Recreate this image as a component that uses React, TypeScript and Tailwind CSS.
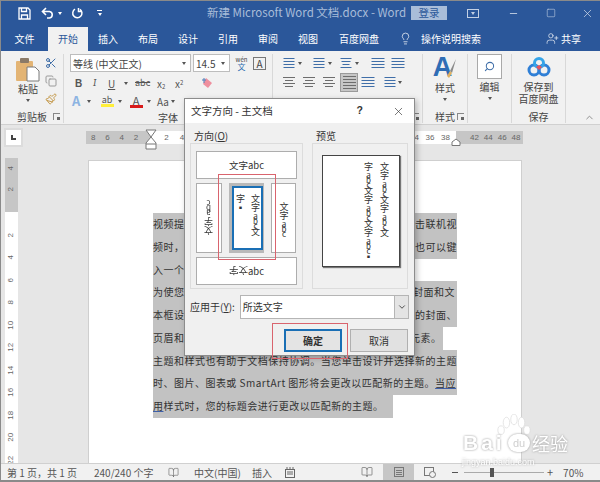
import { BookOpen, ChevronDown, ChevronUp, Copy, Lightbulb, Minus, Paintbrush, Scissors, Search, Square, UserPlus, X } from "lucide-react"

const cjk = { fontFamily: '"Noto Sans CJK SC", "Liberation Sans", sans-serif' }

const hNums = {
  left: ["8", "6", "4", "2"],
  mid: ["2", "4", "6", "8", "10", "12", "14", "16", "18", "20", "22", "24", "26", "28", "30", "32", "34", "36", "38"],
  right: ["42", "44", "46", "48"],
}

const docLines = [
  { text: "视频提供了功能强大的方法帮助您证明您的观点。当您单击联机视", w: "w-[304px]" },
  { text: "频时，可以在想要添加的视频的嵌入代码中进行粘贴。您也可以键", w: "w-[304px]" },
  { text: "入一个关键字以联机搜索最适合您的文档的视频。", w: "w-[240px]" },
  { text: "为使您的文档具有专业外观，Word 提供了页眉、页脚、封面和文", w: "w-[304px]" },
  { text: "本框设计，这些设计可互为补充。例如，您可以添加匹配的封面、", w: "w-[304px]" },
  { text: "页眉和提要栏。单击“插入”，然后从不同库中选择所需元素。", w: "w-[290px]" },
  { text: "主题和样式也有助于文档保持协调。当您单击设计并选择新的主题", w: "w-[304px]" },
]

function Caret({ className = "" }: { className?: string }) {
  return <span className={`inline-block w-0 h-0 border-x-[2px] border-x-transparent border-t-[3px] border-t-[#555] ${className}`} />
}

function Lines({ rows, color = "#6d6d6d", wide = 12 }: { rows: number[]; color?: string; wide?: number }) {
  return (
    <svg width={wide} height={rows.length * 3 + 1} className="shrink-0">
      {rows.map((r, i) => (
        <rect key={i} x={(wide - r) / 2} y={i * 3 + 1} width={r} height="1" fill={color} />
      ))}
    </svg>
  )
}

// vertical text where the latin letters stand upright and small, as Word draws them
function VText({ parts, className = "" }: { parts: string[]; className?: string }) {
  return (
    <span className={`[writing-mode:vertical-rl] whitespace-nowrap text-[9px] leading-[12px] ${className}`}>
      {parts.map((p, i) =>
        p === "abc" ? (
          <span key={i} className="text-[8px] [text-orientation:upright] tracking-[-3px]">abc</span>
        ) : (
          <span key={i}>{p}</span>
        ),
      )}
    </span>
  )
}

function PasteIcon() {
  return (
    <svg width="26" height="25" viewBox="0 0 26 25">
      <rect x="1" y="4" width="17" height="20" rx="1" fill="#e3b474" />
      <rect x="5" y="1" width="9" height="5" rx="1" fill="#8a7a68" />
      <path d="M12 10h8l4 4v10H12z" fill="#fff" stroke="#7b7b7b" />
    </svg>
  )
}

function BaiduLogo() {
  return (
    <svg width="24" height="21" viewBox="0 0 24 21" fill="none">
      <circle cx="7" cy="13" r="5" stroke="#2f7fd6" strokeWidth="3" />
      <circle cx="17" cy="13" r="5" stroke="#2f7fd6" strokeWidth="3" />
      <circle cx="12" cy="6" r="4.5" stroke="#35a4e8" strokeWidth="3" />
      <path d="M9 10l3 3 3-3-3-2z" fill="#e8505b" />
    </svg>
  )
}

function TitleBar() {
  return (
    <div className="h-[27px] shrink-0 flex items-center pb-[2px] bg-[#2b579a] border-t border-[#8a8a8a] text-white">
      <div className="w-[206px] flex items-center pl-[17px]">
        <svg width="13" height="13" viewBox="0 0 13 13" fill="none" stroke="#fff" strokeWidth="1.3">
          <path d="M1 1h9l2 2v9H1z" />
          <path d="M3.5 1v3.5h5V1M3.5 12V8h6v4" />
        </svg>
        <svg width="14" height="12" viewBox="0 0 14 12" fill="none" stroke="#fff" strokeWidth="1.6" className="ml-[10px]">
          <path d="M5 1L1.5 4.5 5 8M2 4.5h6.5a3.3 3.3 0 0 1 0 6.5H6" />
        </svg>
        <Caret className="ml-[3px] border-t-white" />
        <svg width="12" height="12" viewBox="0 0 12 12" fill="none" stroke="#fff" strokeWidth="1.5" className="ml-[9px]">
          <path d="M4 2.2A4.6 4.6 0 1 0 9 2.4M7.5 1v3.4h3" />
        </svg>
        <div className="ml-[14px] flex flex-col items-center gap-[2px]">
          <span className="w-[5px] h-px bg-white" />
          <Caret className="border-t-white" />
        </div>
      </div>
      <div className="w-[204px] text-[11.5px] text-[#a9bdd9] whitespace-nowrap" style={cjk}>
        新建 Microsoft Word 文档.docx - Word
      </div>
      <div className="w-[36px] h-[14px] flex items-center justify-center bg-[#a9bdd9] text-[#2b579a] text-[10.5px]" style={cjk}>
        登录
      </div>
      <div className="ml-[20px] w-[12px] h-[9px] border border-[#c3d0e4] flex justify-center">
        <Caret className="border-t-[#c3d0e4] mt-[2px]" />
      </div>
      <Minus size={11} className="ml-[29px] text-[#c3d0e4]" />
      <Square size={10} strokeWidth={1.4} className="ml-[27px] text-[#c3d0e4]" />
      <X size={13} strokeWidth={1.3} className="ml-[25px] text-[#d5deec]" />
    </div>
  )
}

function Tabs() {
  const tabs = ["插入", "布局", "设计", "引用", "审阅", "视图"]
  return (
    <div className="h-[24px] shrink-0 flex items-center bg-[#2b579a] text-white text-[10px]" style={cjk}>
      <div className="w-[47px] text-center pb-[2px]">文件</div>
      <div className="w-[40px] h-full flex items-center justify-center pb-[2px] bg-[#f1f1f1] text-[#2b579a]">开始</div>
      {tabs.map((t) => (
        <div key={t} className="w-[40px] text-center pb-[2px]">
          {t}
        </div>
      ))}
      <div className="w-[62px] text-center pb-[2px]">百度网盘</div>
      <Lightbulb size={13} strokeWidth={1.3} className="ml-[9px] mb-[2px]" />
      <div className="ml-[9px] w-[125px] pb-[2px]">操作说明搜索</div>
      <UserPlus size={13} strokeWidth={1.2} className="mb-[2px]" />
      <div className="ml-[2px] pb-[2px]">共享</div>
    </div>
  )
}

function Launcher() {
  return (
    <span className="w-[7px] h-[7px] border-l border-t border-[#888] relative inline-block">
      <span className="absolute right-0 bottom-0 w-[3px] h-[3px] bg-[#666]" />
    </span>
  )
}

function GroupLabel({ children, launcher }: { children: string; launcher?: boolean }) {
  return (
    <div className="h-[14px] flex items-center justify-center relative text-[10px] text-[#444]">
      {children}
      {launcher && (
        <span className="absolute right-[3px] top-[4px] flex">
          <Launcher />
        </span>
      )}
    </div>
  )
}

function Ribbon() {
  return (
    <div className="h-[74px] shrink-0 flex bg-[#f1f1f1] pt-[3px] pb-[1px] border-b border-[#d0d0d0] text-[#444]" style={cjk}>
      <div className="w-[63px] flex flex-col border-r border-[#d8d8d8]">
        <div className="flex-1 flex pl-[12px]">
          <div className="w-[30px] flex flex-col items-center pt-[3px]">
            <PasteIcon />
            <span className="text-[10px] leading-[14px]">粘贴</span>
            <Caret className="mt-[3px]" />
          </div>
          <div className="ml-[2px] flex flex-col gap-[6px] pt-[3px] items-center">
            <Scissors size={12} className="text-[#3f6ea8]" />
            <Copy size={12} className="text-[#9a9a9a]" />
            <Paintbrush size={12} className="text-[#c59a4c]" />
          </div>
        </div>
        <GroupLabel launcher>剪贴板</GroupLabel>
      </div>

      <div className="w-[209px] flex flex-col border-r border-[#d8d8d8]">
        <div className="flex-1 pl-[6px]">
          <div className="flex items-center">
            <div className="w-[121px] h-[18px] bg-white border border-[#bdbdbd] flex items-center justify-between px-[2px] pr-[4px] text-[10px]">
              等线 (中文正文)
              <Caret />
            </div>
            <div className="ml-[2px] w-[37px] h-[18px] bg-white border border-[#bdbdbd] flex items-center justify-between px-[2px] pr-[4px] text-[10px]">
              14.5
              <Caret />
            </div>
            <div className="ml-[4px] w-[15px] flex flex-col items-center leading-[7px]">
              <span className="text-[6px] text-[#444]">wén</span>
              <span className="text-[8px] text-[#2b6cb0]">文</span>
            </div>
            <div className="ml-[4px] w-[13px] h-[13px] border border-[#777] flex items-center justify-center text-[10px]">A</div>
          </div>
          <div className="mt-[2px] h-[18px] flex items-center text-[10px] text-[#555]">
            <span className="ml-[5px] w-[15px] font-bold" style={{ fontFamily: "Liberation Sans" }}>B</span>
            <span className="ml-[3px] w-[15px] italic font-serif">I</span>
            <span className="w-[13px] underline">U</span>
            <Caret className="ml-[3px]" />
            <span className="ml-[7px] w-[15px] line-through text-[9px]">abc</span>
            <span className="ml-[7px] w-[15px]">x<sub className="text-[6px]">2</sub></span>
            <span className="ml-[3px] w-[15px]">x<sup className="text-[6px]">2</sup></span>
            <svg width="12" height="12" viewBox="0 0 12 12" className="ml-[11px]">
              <path d="M5 1l6 5-4 5-5-4z" fill="#ee8f9e" />
              <path d="M1 3h4M3 1v5" stroke="#4a7ab8" strokeWidth="1" />
            </svg>
          </div>
          <div className="h-[18px] flex items-center text-[#555]">
            <span className="ml-[2px] w-[12px] text-[13px] font-bold text-[#8db4e2]">A</span>
            <Caret className="ml-[3px]" />
            <span className="ml-[9px] w-[14px] flex flex-col items-center text-[9px] leading-[9px]">
              ab
              <span className="w-[13px] h-[3px] bg-[#ffef3a]" />
            </span>
            <Caret className="ml-[4px]" />
            <span className="ml-[7px] w-[14px] flex flex-col items-center text-[11px] leading-[10px]">
              A
              <span className="w-[13px] h-[3px] bg-[#d81a1a]" />
            </span>
            <Caret className="ml-[4px]" />
            <span className="ml-[6px] text-[10px]">Aa</span>
            <Caret className="ml-[2px]" />
          </div>
        </div>
        <GroupLabel>字体</GroupLabel>
      </div>

      <div className="w-[150px] flex flex-col border-r border-[#d8d8d8]">
        <div className="flex-1 pl-[10px]">
          <div className="h-[18px] flex items-center">
            <Lines rows={[11, 11, 11, 11]} color="#3f6ea8" />
            <Caret className="ml-[3px]" />
            <span className="ml-[11px]"><Lines rows={[11, 11, 11, 11]} color="#3f6ea8" /></span>
            <Caret className="ml-[3px]" />
            <span className="ml-[8px]"><Lines rows={[11, 9, 7, 11]} color="#3f6ea8" /></span>
            <Caret className="ml-[3px]" />
            <span className="ml-[12px]"><Lines rows={[13, 13, 13, 13]} wide={14} color="#3f6ea8" /></span>
            <span className="ml-[6px]"><Lines rows={[13, 13, 13, 13]} wide={14} color="#3f6ea8" /></span>
          </div>
          <div className="mt-[1px] h-[19px] flex items-center">
            <Lines rows={[12, 8, 12, 8]} />
            <span className="ml-[8px]"><Lines rows={[12, 8, 12, 8]} /></span>
            <span className="ml-[8px]"><Lines rows={[12, 8, 12, 8]} /></span>
            <div className="ml-[5px] w-[18px] h-[19px] flex items-center justify-center bg-[#c6c6c6] border border-[#9a9a9a]">
              <Lines rows={[13, 13, 13, 13, 13]} wide={13} />
            </div>
            <span className="ml-[3px]"><Lines rows={[13, 13, 13, 13]} wide={14} color="#3f6ea8" /></span>
            <span className="ml-[9px]"><Lines rows={[11, 11, 11, 11]} color="#3f6ea8" /></span>
            <Caret className="ml-[2px]" />
          </div>
        </div>
        <GroupLabel launcher> </GroupLabel>
      </div>

      <div className="w-[45px] flex flex-col border-r border-[#d8d8d8]">
        <div className="flex-1 flex flex-col items-center">
          <div className="h-[27px] flex items-start">
            <span className="text-[27px] leading-[27px] font-bold text-[#2f6db5]" style={{ fontFamily: "Liberation Sans" }}>A</span>
            <svg width="10" height="22" viewBox="0 0 10 22" className="-ml-[5px] mt-[4px]">
              <path d="M9 1L3 13l2 2z" fill="#8a8a8a" />
              <path d="M3 13l2 2-3 5-2-2z" fill="#e0b060" />
            </svg>
          </div>
          <span className="text-[10px] leading-[14px]">样式</span>
          <Caret className="mt-[3px]" />
        </div>
        <GroupLabel launcher>样式</GroupLabel>
      </div>

      <div className="w-[44px] flex flex-col border-r border-[#d8d8d8]">
        <div className="flex-1 flex flex-col items-center">
          <div className="w-[25px] h-[25px] bg-white border border-[#a9a9a9] flex items-center justify-center">
            <Search size={11} strokeWidth={2.2} className="text-[#3f6ea8] -scale-x-100" />
          </div>
          <span className="text-[10px] leading-[14px] mt-[1px]">编辑</span>
          <Caret className="mt-[3px]" />
        </div>
        <div className="h-[14px]" />
      </div>

      <div className="w-[54px] flex flex-col border-r border-[#d8d8d8]">
        <div className="flex-1 flex flex-col items-center pt-[3px]">
          <BaiduLogo />
          <span className="mt-[3px] text-[10px] leading-[12px]">保存到</span>
          <span className="text-[10px] leading-[12px] whitespace-nowrap">百度网盘</span>
        </div>
        <GroupLabel>保存</GroupLabel>
      </div>

      <div className="flex-1 flex items-end justify-end pr-[5px]">
        <ChevronUp size={11} className="text-[#888]" />
      </div>
    </div>
  )
}

function HRuler() {
  return (
    <div className="h-[25px] shrink-0 flex items-center text-[8px] text-[#666]" style={{ fontFamily: "Liberation Sans" }}>
      <div className="ml-[3px] w-[19px] h-[19px] bg-white border-[2px] border-[#dcdcdc] flex items-center justify-center">
        <span className="w-[5px] h-[5px] border-l-2 border-b-2 border-[#444]" />
      </div>
      <div className="ml-[63px] h-[13px] flex">
        <div className="w-[65px] bg-[#c6c6c6] flex justify-end items-center pr-[7.75px]">
          {hNums.left.map((n) => (
            <span key={n} className="w-[15.5px] text-center">{n}</span>
          ))}
        </div>
        <div className="relative w-[305px] bg-white flex items-center pl-[7.75px]">
          {hNums.mid.map((n) => (
            <span key={n} className="w-[15.5px] text-center">{n}</span>
          ))}
          <svg width="14" height="22" viewBox="0 0 14 22" fill="#fff" stroke="#777" className="absolute -left-[7px] -top-[2px]">
            <path d="M2 1h10L7 8zM7 8l5 6v6H2v-6z" />
            <path d="M2 15h10" />
          </svg>
          <svg width="10" height="8" viewBox="0 0 10 8" fill="#fff" stroke="#777" className="absolute -right-[5px] top-[7px]">
            <path d="M1 7.5V4l4-3 4 3v3.5z" />
          </svg>
        </div>
        <div className="w-[67px] bg-[#c6c6c6] flex items-center pl-[11.5px]">
          {hNums.right.map((n) => (
            <span key={n} className="w-[15.5px] text-center">{n}</span>
          ))}
        </div>
      </div>
    </div>
  )
}

function VRuler() {
  const whiteNums = ["2", "4", "6", "8", "10", "12", "14", "16", "18", "20", "22"]
  return (
    <div className="ml-[4px] w-[13px] mt-[8px] flex flex-col text-[8px] text-[#666]" style={{ fontFamily: "Liberation Sans" }}>
      <div className="h-[54px] shrink-0 bg-[#c6c6c6] flex flex-col justify-end items-center pb-[12.75px]">
        {["4", "2"].map((n) => (
          <span key={n} className="h-[22.5px] flex items-center -rotate-90">{n}</span>
        ))}
      </div>
      <div className="flex-1 bg-white flex flex-col items-center pt-[11.75px]">
        {whiteNums.map((n) => (
          <span key={n} className="h-[22.5px] flex items-center -rotate-90">{n}</span>
        ))}
      </div>
    </div>
  )
}

function Page() {
  return (
    <div className="ml-[70px] w-[434px] mt-[10px] bg-white border-x border-t border-[#cfcfcf] pl-[64px] pt-[52px] text-[10px] leading-[22.75px] text-[#333] overflow-hidden" style={cjk}>
      {docLines.map((l) => (
        <div key={l.text} className={`${l.w} bg-[#c2c2c2] whitespace-nowrap tracking-[0.48px]`}>
          {l.text}
        </div>
      ))}
      <div className="w-[304px] bg-[#c2c2c2] whitespace-nowrap tracking-[0.48px]">
        时、图片、图表或 SmartArt 图形将会更改以匹配新的主题。
        <span className="underline decoration-[#3f5fa8]">当应</span>
      </div>
      <div className="w-[240px] bg-[#c2c2c2] whitespace-nowrap tracking-[0.48px]">
        <span className="underline decoration-[#3f5fa8]">用</span>样式时，您的标题会进行更改以匹配新的主题。
      </div>
    </div>
  )
}

function OptionBox({ children, className = "" }: { children: React.ReactNode; className?: string }) {
  return <div className={`bg-white border border-[#adadad] flex items-center justify-center text-[9.5px] text-[#333] ${className}`}>{children}</div>
}

function Dialog() {
  return (
    <div className="absolute left-[183px] top-[98px] w-[231px] h-[258px] bg-[#f0f0f0] border border-[#8c8c8c] shadow-[2px_2px_6px_rgba(0,0,0,0.25)] text-[#333] flex flex-col" style={cjk}>
      <div className="h-[24px] shrink-0 bg-white flex items-center px-[6px] text-[10.5px]">
        <span className="flex-1">文字方向 - 主文档</span>
        <span className="mr-[29px] font-bold" style={{ fontFamily: "Liberation Sans" }}>?</span>
        <X size={13} strokeWidth={1.2} className="mr-[3px]" />
      </div>
      <div className="flex-1 flex flex-col px-[5px]">
        <div className="flex gap-[9px]">
          <div className="w-[113px]">
            <div className="h-[20px] flex items-end text-[10px] leading-[14px] pl-[4px]">
              <span>方向(<span className="underline">O</span>)</span>
            </div>
            <div className="h-[146px] border border-[#dcdcdc] pt-[7px] px-[5px] flex flex-col gap-[4px]">
              <OptionBox className="h-[28px] shrink-0">文字abc</OptionBox>
              <div className="h-[70px] shrink-0 flex">
                <OptionBox className="w-[26px]">
                  <VText parts={["文字", "abc"]} className="rotate-180" />
                </OptionBox>
                <div className="ml-[7px] w-[35px] bg-[#b9b9b9] p-[3px] flex">
                  <div className="flex-1 bg-white border-2 border-[#1a6fb5] flex flex-row-reverse justify-center gap-[3px] pt-[6px]">
                    <VText parts={["文字", "abc", "文"]} />
                    <VText parts={["字", "▪"]} />
                  </div>
                </div>
                <OptionBox className="ml-[7px] w-[25px]">
                  <VText parts={["文字", "abc"]} />
                </OptionBox>
              </div>
              <OptionBox className="h-[28px] shrink-0">
                <span className="inline-block rotate-180">文字</span>abc
              </OptionBox>
            </div>
          </div>
          <div className="w-[96px]">
            <div className="h-[20px] flex items-end text-[10px] leading-[14px] pl-[4px]">预览</div>
            <div className="h-[146px] border border-[#dcdcdc] pt-[11px] pl-[9px]">
              <div className="w-[78px] h-[112px] bg-white border border-[#444] shadow-[1px_1px_1px_#777] flex flex-row-reverse gap-[4px] pl-[4px] pr-[9px] pt-[6px]">
                <VText parts={["文字", "abc", "文字", "abc", "文"]} />
                <VText parts={["字", "abc", "文字", "abc", "文字", "abc", "▪"]} />
              </div>
            </div>
          </div>
        </div>
        <div className="mt-[5px] h-[25px] flex items-center">
          <span className="w-[50px] text-[10px] whitespace-nowrap">应用于(<span className="underline">Y</span>):</span>
          <div className="w-[170px] h-[24px] bg-white border border-[#b5b5b5] flex items-center pl-[2px] text-[10px]">
            <span className="flex-1">所选文字</span>
            <span className="w-[14px] h-full bg-[#e4e4e4] border-l border-[#b5b5b5] flex items-center justify-center">
              <ChevronDown size={10} />
            </span>
          </div>
        </div>
        <div className="mt-[10px] flex justify-end gap-[8px] pr-[1px] text-[10px]">
          <div className="w-[58px] h-[23px] bg-[#e4e4e4] border-2 border-[#1a6fb5] flex items-center justify-center font-bold">确定</div>
          <div className="w-[58px] h-[23px] bg-[#e1e1e1] border border-[#b0b0b0] flex items-center justify-center">取消</div>
        </div>
      </div>
    </div>
  )
}

function StatusBar() {
  return (
    <div className="h-[16px] shrink-0 flex items-center bg-[#f1f1f1] border-t border-[#d0d0d0] border-b-[2px] border-b-[#8a8a8a] box-content text-[10px] text-[#555]" style={cjk}>
      <span className="ml-[6px] w-[87px]">第 1 页，共 1 页</span>
      <span className="w-[74px]">240/240 个字</span>
      <BookOpen size={11} strokeWidth={1.2} />
      <span className="ml-[15px] w-[58px]">中文(中国)</span>
      <span className="w-[33px]">插入</span>
      <svg width="10" height="11" viewBox="0 0 10 11" fill="none" stroke="#666">
        <rect x="0.5" y="2.5" width="9" height="8" />
        <path d="M2 0v3M5 0v3M8 0v3M2 5h6M2 7h6" />
      </svg>
      <BookOpen size={12} strokeWidth={1.2} className="ml-[66px]" />
      <div className="ml-[10px] w-[31px] h-full bg-[#c6c6c6] flex items-center justify-center">
        <span className="w-[10px] h-[10px] border border-[#777] flex flex-col justify-center gap-px px-px">
          <span className="h-px bg-[#777]" />
          <span className="h-px bg-[#777]" />
          <span className="h-px bg-[#777]" />
        </span>
      </div>
      <svg width="12" height="11" viewBox="0 0 12 11" fill="none" stroke="#777" className="ml-[10px]">
        <rect x="0.5" y="0.5" width="9" height="8" />
        <circle cx="8.5" cy="7.5" r="3" fill="#f1f1f1" />
      </svg>
      <span className="ml-[16px] w-[6px] h-px bg-[#555]" />
      <div className="ml-[6px] w-[80px] h-px bg-[#aaa] flex items-center">
        <span className="ml-[26px] w-[4px] h-[9px] bg-[#555]" />
      </div>
      <span className="ml-[3px] text-[11px]">+</span>
      <span className="ml-[10px]">70%</span>
    </div>
  )
}

function Watermark() {
  return (
    <div className="absolute left-[460px] top-[414px] w-[108px] h-[54px] text-white pointer-events-none">
      <svg width="36" height="28" viewBox="0 0 32 26" fill="#fff" stroke="#d8d8d8" strokeWidth="0.6" className="absolute left-[35px] top-0">
        <ellipse cx="9" cy="8" rx="3" ry="5" />
        <ellipse cx="16" cy="5" rx="3" ry="5" />
        <ellipse cx="23" cy="8" rx="3" ry="5" />
        <ellipse cx="4" cy="15" rx="3" ry="4" />
        <ellipse cx="28" cy="15" rx="3" ry="4" />
      </svg>
      <div className="absolute left-[2px] top-[14px] flex items-center drop-shadow-[0_0_1px_#999]">
        <span className="w-[45px] text-[21px] leading-[30px] font-bold tracking-[3px]" style={{ fontFamily: "Liberation Sans" }}>Bai</span>
        <span className="w-[22px] h-[18px] rounded-full bg-white text-[#cfcfcf] text-[11px] leading-[18px] text-center" style={{ fontFamily: "Liberation Sans" }}>du</span>
        <span className="ml-[2px] text-[18px] leading-[30px] whitespace-nowrap" style={cjk}>经验</span>
      </div>
      <div className="absolute left-[1px] top-[42px] text-[9px] text-white whitespace-nowrap drop-shadow-[0_0_1px_#aaa]" style={{ fontFamily: "Liberation Sans" }}>jingyan.baidu.com</div>
    </div>
  )
}

export default function App() {
  return (
    <div className="relative w-[600px] h-[482px] overflow-hidden flex flex-col bg-[#e6e6e6] border-l border-[#8a8a8a]">
      <TitleBar />
      <Tabs />
      <Ribbon />
      <HRuler />
      <div className="flex-1 min-h-0 flex overflow-hidden">
        <VRuler />
        <Page />
      </div>
      <StatusBar />
      <Dialog />
      <div className="absolute left-[217px] top-[174px] w-[58px] h-[86px] border border-[#d9646e]" />
      <div className="absolute left-[271px] top-[323px] w-[76px] h-[36px] border border-[#d9646e]" />
      <Watermark />
    </div>
  )
}
